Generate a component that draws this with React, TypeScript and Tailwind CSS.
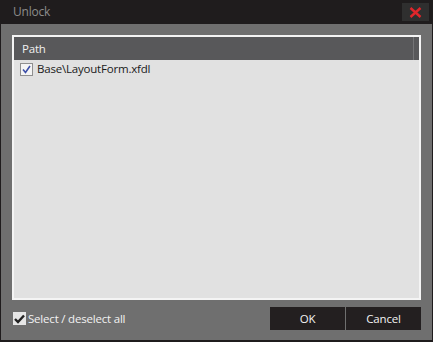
import React, { useState } from "react";

export default function App() {
  const [items, setItems] = useState([{ path: "Base\\LayoutForm.xfdl", checked: true }]);
  const allChecked = items.every((i) => i.checked);

  const toggle = (idx: number) =>
    setItems((prev) => prev.map((it, i) => (i === idx ? { ...it, checked: !it.checked } : it)));

  return (
    <div
      className="w-[433px] h-[342px] flex flex-col bg-[#1f1c1d] px-px pb-[2px] text-[11.5px] tracking-[-0.2px]"
      style={{ fontFamily: '"Open Sans", "Noto Sans", sans-serif' }}
    >
      {/* Title bar */}
      <div className="h-6 flex items-center justify-between pl-[12px] pr-[3px] shrink-0">
        <span className="text-[#8c8c8c] text-[12px]">Unlock</span>
        <button className="w-[27px] h-[18px] bg-[#2f2f2f] flex items-center justify-center">
          <svg width="13" height="11" viewBox="0 0 13 11">
            <path d="M1.5 1 L11.5 10 M11.5 1 L1.5 10" stroke="#e0262b" strokeWidth="2.4" />
          </svg>
        </button>
      </div>

      {/* Body */}
      <div className="flex-1 bg-[#6f6f6f] flex flex-col pt-[11px] px-[11px] pb-[9px]">
        {/* List */}
        <div className="h-[265px] border-2 border-[#f4f4f4] bg-[#e1e1e1] flex flex-col">
          <div className="h-[23px] bg-[#58585a] flex shrink-0">
            <div className="flex-1 flex items-center pl-2 text-[#f0f0f0] border-r border-[#747476]">Path</div>
            <div className="w-[5px]" />
          </div>
          {items.map((it, idx) => (
            <div key={it.path} className="h-[18px] flex items-center pl-[6px] gap-[4px] text-[#1a1a1a]">
              <button
                onClick={() => toggle(idx)}
                className="w-[13px] h-[13px] border border-[#8f8f8f] bg-[#f4f4f4] flex items-center justify-center"
              >
                {it.checked && (
                  <svg width="9" height="9" viewBox="0 0 9 9">
                    <path d="M1 4.5 L3.5 7.5 L8 1" fill="none" stroke="#3c4fa8" strokeWidth="1.6" />
                  </svg>
                )}
              </button>
              <span>{it.path}</span>
            </div>
          ))}
        </div>

        {/* Footer */}
        <div className="flex items-center justify-between mt-[7px]">
          <label className="flex items-center gap-[2px] pl-px text-[#f2f2f2] cursor-pointer">
            <button
              onClick={() => setItems((p) => p.map((it) => ({ ...it, checked: !allChecked })))}
              className="w-[13px] h-[13px] bg-[#e6e6e6] flex items-center justify-center"
            >
              {allChecked && (
                <svg width="11" height="10" viewBox="0 0 11 10">
                  <path d="M1 5 L4 8 L10 1.5" fill="none" stroke="#222" strokeWidth="2.4" />
                </svg>
              )}
            </button>
            <span>Select / deselect all</span>
          </label>
          <div className="flex gap-px">
            <button className="w-[75px] h-[23px] bg-[#231f20] text-[#f2f2f2]">OK</button>
            <button className="w-[75px] h-[23px] bg-[#231f20] text-[#f2f2f2]">Cancel</button>
          </div>
        </div>
      </div>
    </div>
  );
}
